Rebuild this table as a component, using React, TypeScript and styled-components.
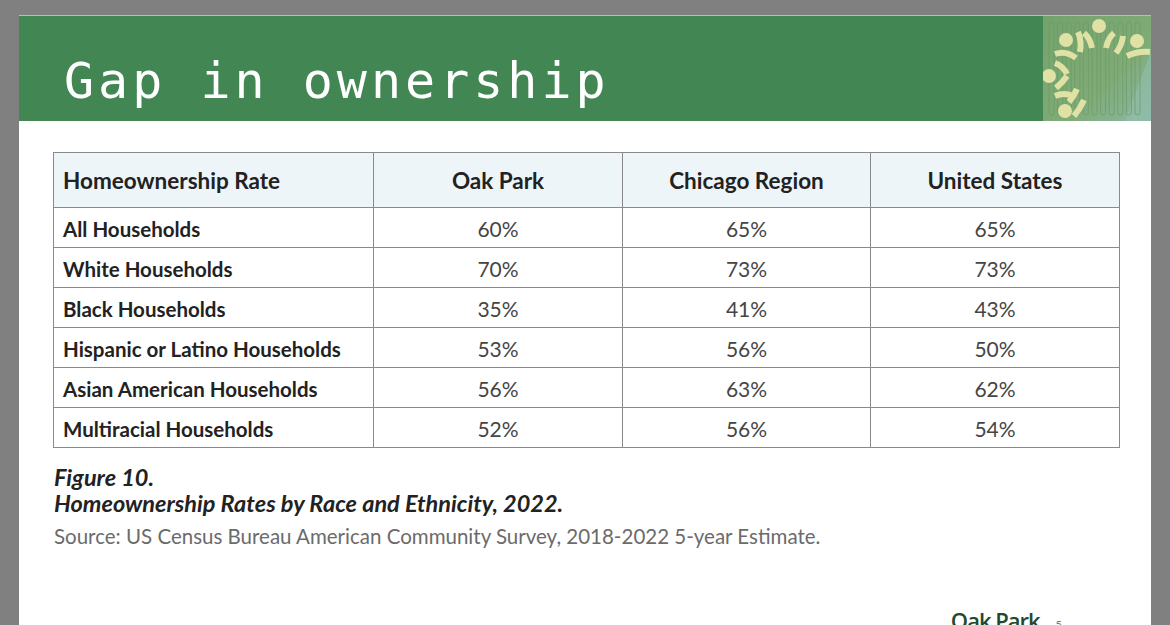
import React from "react";
import styled, { createGlobalStyle } from "styled-components";

const Global = createGlobalStyle`
  html, body { margin: 0; padding: 0; overflow: hidden; background: #808080; }
  #root { width: 1170px; height: 625px; overflow: hidden; }
`;

const Stage = styled.div`
  width: 1170px;
  height: 625px;
  padding: 15px 19px 0 19px;
  box-sizing: border-box;
  overflow: hidden;
`;

const Slide = styled.div`
  width: 1132px;
  height: 700px;
  background: #ffffff;
  display: flex;
  flex-direction: column;
`;

const Header = styled.header`
  height: 106px;
  display: flex;
  background: #428753;
  border-top: 1px solid #a8c6b0;
  box-sizing: border-box;
`;

const Title = styled.h1`
  flex: 1;
  margin: 0;
  padding: 24px 0 0 45px;
  display: flex;
  align-items: center;
  font-family: "DejaVu Sans Mono", "Liberation Mono", monospace;
  font-weight: normal;
  font-size: 50px;
  letter-spacing: 4px;
  color: #ffffff;
`;

const LogoBox = styled.div`
  width: 108px;
  height: 105px;
  flex: none;
`;

const Body = styled.main`
  padding: 31px 31px 0 34px;
  display: flex;
  flex-direction: column;
`;

const Table = styled.table`
  width: 1067px;
  border-collapse: collapse;
  font-family: Lato, "Open Sans", sans-serif;
  color: #222;
`;

const Th = styled.th<{ $first?: boolean }>`
  height: 52px;
  background: #eef5f9;
  border: 1px solid #8a8a8a;
  font-size: 22.5px;
  line-height: 24px;
  font-weight: 700;
  text-align: ${(p) => (p.$first ? "left" : "center")};
  padding: ${(p) => (p.$first ? "2px 0 0 9px" : "2px 0 0 0")};
  color: #222;
`;

const Td = styled.td<{ $label?: boolean }>`
  height: 37px;
  border: 1px solid #8a8a8a;
  font-size: ${(p) => (p.$label ? "20.5px" : "21px")};
  line-height: 22px;
  font-weight: ${(p) => (p.$label ? 700 : 400)};
  text-align: ${(p) => (p.$label ? "left" : "center")};
  padding: ${(p) => (p.$label ? "2px 0 0 9px" : "2px 0 0 0")};
  color: ${(p) => (p.$label ? "#222" : "#454545")};
`;

const Caption = styled.div`
  margin-top: 16px;
  font-family: Lato, "Open Sans", sans-serif;
  font-style: italic;
  font-weight: 700;
  font-size: 23.5px;
  line-height: 26px;
  color: #222;
  padding-left: 1px;
`;

const Source = styled.div`
  margin-top: 8px;
  font-family: Lato, "Open Sans", sans-serif;
  font-size: 20.5px;
  color: #6b6b6b;
  padding-left: 1px;
`;

const Footer = styled.div`
  margin-top: 57px;
  display: flex;
  align-items: baseline;
  justify-content: flex-end;
  gap: 16px;
  padding-right: 58px;
`;

const Brand = styled.span`
  font-family: "Open Sans", Lato, sans-serif;
  font-weight: 600;
  font-size: 22px;
  color: #1f4a30;
  letter-spacing: -1px;
`;

const PageNo = styled.span`
  font-family: Lato, sans-serif;
  font-size: 11px;
  color: #777;
`;

const Logo = () => (
  <svg width="108" height="105" viewBox="0 0 108 105">
    <defs>
      <linearGradient id="lg" x1="0" y1="0" x2="1" y2="1">
        <stop offset="0" stopColor="#74a26c" />
        <stop offset="0.6" stopColor="#7fab77" />
        <stop offset="1" stopColor="#8cb7a6" />
      </linearGradient>
    </defs>
    <rect width="108" height="105" fill="url(#lg)" />
    <polygon points="82,105 108,35 108,105" fill="#93bfb0" opacity="0.55" />
    {Array.from({ length: 11 }).map((_, i) => (
      <rect
        key={i}
        x={6 + i * 8.6}
        y={6}
        width={5}
        height={93}
        rx={2.5}
        fill="none"
        stroke="#6a9b63"
        strokeWidth={1}
        opacity={0.7}
      />
    ))}
    <g fill="#dfe2a4">
      <circle cx="56" cy="10" r="7" />
      <circle cx="23" cy="24" r="7" />
      <circle cx="94" cy="25" r="7" />
      <circle cx="6" cy="60" r="7" />
      <circle cx="22" cy="95" r="7" />
    </g>
    <g fill="none" stroke="#dfe2a4" strokeWidth="6" strokeLinecap="butt">
      <path d="M41 17 Q47 22 49 32" />
      <path d="M71 17 Q65 22 63 32" />
      <path d="M35 16 Q39 25 37 36" />
      <path d="M12 38 Q23 34 33 42" />
      <path d="M80 20 Q79 29 73 37" />
      <path d="M84 40 Q95 35 107 36" />
      <path d="M12 47 Q20 50 24 58" />
      <path d="M13 72 Q20 66 24 60" />
      <path d="M12 80 Q21 76 30 80" />
      <path d="M26 86 Q31 80 34 73" />
      <path d="M31 100 Q37 93 41 84" />
    </g>
  </svg>
);

const header = ["Homeownership Rate", "Oak Park", "Chicago Region", "United States"];
const rows: [string, string, string, string][] = [
  ["All Households", "60%", "65%", "65%"],
  ["White Households", "70%", "73%", "73%"],
  ["Black Households", "35%", "41%", "43%"],
  ["Hispanic or Latino Households", "53%", "56%", "50%"],
  ["Asian American Households", "56%", "63%", "62%"],
  ["Multiracial Households", "52%", "56%", "54%"],
];

export default function App() {
  return (
    <>
      <Global />
      <Stage>
        <Slide>
          <Header>
            <Title>Gap in ownership</Title>
            <LogoBox>
              <Logo />
            </LogoBox>
          </Header>
          <Body>
            <Table>
              <colgroup>
                <col style={{ width: 320 }} />
                <col style={{ width: 249 }} />
                <col style={{ width: 248 }} />
                <col style={{ width: 249 }} />
              </colgroup>
              <thead>
                <tr>
                  {header.map((h, i) => (
                    <Th key={h} $first={i === 0}>
                      {h}
                    </Th>
                  ))}
                </tr>
              </thead>
              <tbody>
                {rows.map((r) => (
                  <tr key={r[0]}>
                    {r.map((c, i) => (
                      <Td key={i} $label={i === 0}>
                        {c}
                      </Td>
                    ))}
                  </tr>
                ))}
              </tbody>
            </Table>
            <Caption>
              Figure 10.
              <br />
              Homeownership Rates by Race and Ethnicity, 2022.
            </Caption>
            <Source>
              Source: US Census Bureau American Community Survey, 2018-2022 5-year Estimate.
            </Source>
            <Footer>
              <Brand>Oak Park</Brand>
              <PageNo>5</PageNo>
            </Footer>
          </Body>
        </Slide>
      </Stage>
    </>
  );
}
